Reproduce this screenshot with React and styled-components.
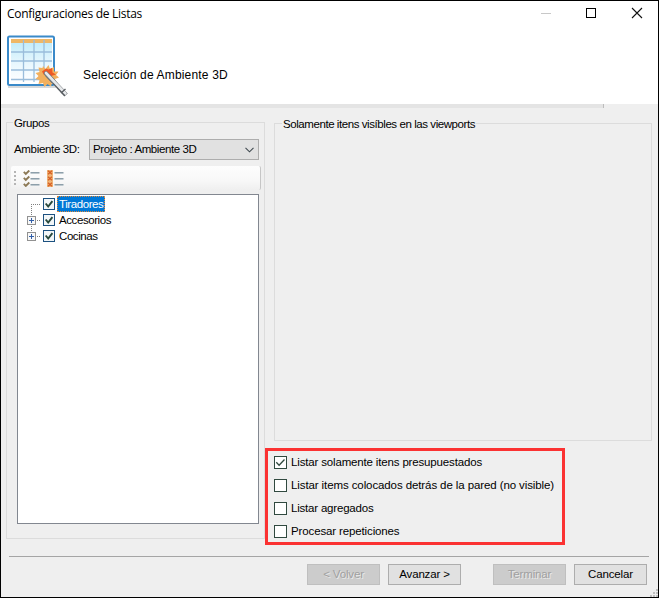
import React, { useState } from "react";
import styled, { createGlobalStyle } from "styled-components";

const options = [
	{ label: "Listar solamente itens presupuestados", checked: true, tracking: -0.16 },
	{ label: "Listar items colocados detrás de la pared (no visible)", checked: false, tracking: -0.1 },
	{ label: "Listar agregados", checked: false, tracking: -0.2 },
	{ label: "Procesar repeticiones", checked: false, tracking: -0.13 },
];

const groups = [
	{ name: "Tiradores", selected: true, expandable: false },
	{ name: "Accesorios", selected: false, expandable: true },
	{ name: "Cocinas", selected: false, expandable: true },
];

// sheet with the magic wand shown in the header
function WizardLogo() {
	return (
		<svg width="64" height="68" viewBox="0 0 64 68">
			<defs>
				<linearGradient id="sheet" x1="0" y1="0" x2="0" y2="1">
					<stop offset="0" stopColor="#bdeaf9" />
					<stop offset="0.6" stopColor="#eaf8fe" />
					<stop offset="1" stopColor="#ffffff" />
				</linearGradient>
			</defs>
			<path d="M2 56H50" stroke="#d6d9db" strokeWidth="2" />
			<rect x="2" y="5.5" width="46" height="48.5" rx="1.5" fill="#fff" stroke="#3a8ac9" strokeWidth="2" />
			<rect x="5" y="8" width="41" height="43" fill="url(#sheet)" />
			<rect x="5" y="8" width="41" height="4" fill="#efb766" />
			<path
				d="M5 21H46M5 30H46M5 39H46M5 48.5H46M17.5 9V51M28 9V51M38 9V51"
				stroke="#9abddb"
				strokeWidth="1.3"
				fill="none"
			/>
			<g transform="translate(0 -1)">
				<path
					d="M37 36l2.5 3 3-4 1.5 4 4-2 0 4.5 4.5 0-2.5 3.5 3 2.5-4 1.5 1 4-4-.5-1 4-3.5-2.5-3 3-1.500-4-4.5 1 1-4-4-1 3-3-3-3 4-1-1-4.5 4 .5z"
					fill="#f2b05e"
				/>
				<path d="M36 41.500l4-3 2.500 1 3.500-1.500.5 4.500 3.500 2-5 1.500-4-3-3 2z" fill="#ee5a27" />
				<path d="M41 44.500L60 65" stroke="#565b60" strokeWidth="4.5" />
				<path d="M40 43.500L47 51" stroke="#737b80" strokeWidth="4.5" strokeLinecap="round" />
				<path d="M40 43L59.5 63.5" stroke="#e7e9eb" strokeWidth="2.6" strokeLinecap="round" />
				<path d="M55 63l4.500-4" stroke="#565b60" strokeWidth="1.3" />
			</g>
		</svg>
	);
}

function ListIcon({ crossed }) {
	return (
		<svg width="17" height="17" viewBox="0 0 17 17">
			{crossed && <rect width="6" height="17" fill="#efb477" />}
			{[0, 6, 12].map((y) => (
				<g key={y} transform={`translate(0 ${y})`}>
					{crossed ? (
						<path d="M1 .7l4 3.5M5 .7l-4 3.5" stroke="#d65f24" strokeWidth="1.3" />
					) : (
						<path d="M.8 1.8l2 2.1L6.3.5" stroke="#8c7955" strokeWidth="1.9" fill="none" />
					)}
					<path d="M7.5 2.5h9" stroke="#8d9faa" />
					<path d="M7.5 3.5h9" stroke="#bdc8ce" />
				</g>
			))}
		</svg>
	);
}

function Expander({ expandable, last }) {
	return (
		<svg width="20" height="16" viewBox="0 0 20 16" shapeRendering="crispEdges">
			<path
				d={expandable ? (last ? "M8.5 0v8" : "M8.5 0v16") : "M8.5 8v8"}
				stroke="#808080"
				strokeDasharray="1 1"
			/>
			<path d="M8 8.5h9" stroke="#808080" strokeDasharray="1 1" />
			{expandable && (
				<>
					<rect x="4.5" y="4.5" width="8" height="8" fill="#f8f8f8" stroke="#919191" />
					<path d="M6 8.5h5M8.5 6v5" stroke="#315ea8" />
				</>
			)}
		</svg>
	);
}

function App() {
	const [checks, setChecks] = useState(options.map((o) => o.checked));

	const toggle = (index) => {
		setChecks(checks.map((c, i) => (i === index ? !c : c)));
	};

	return (
		<>
			<GlobalStyle />
			<Window>
				<Header>
					<TitleBar>
						<Title>Configuraciones de Listas</Title>
						<WindowControls width="112" height="24" viewBox="0 0 112 24">
							<path d="M0 12.5h10" stroke="#c8c8c8" />
							<rect x="45.5" y="7.5" width="9" height="9" fill="none" stroke="#000" />
							<path d="M91 7l10 10M101 7l-10 10" stroke="#111" strokeWidth="1.1" />
						</WindowControls>
					</TitleBar>
					<Banner>
						<WizardLogo />
						<Heading>Selección de Ambiente 3D</Heading>
					</Banner>
				</Header>
				<Strip />
				<Content>
					<GroupBox $width={259} $height={423}>
						<Legend $tracking={-0.4}>Grupos</Legend>
						<FieldRow>
							<FieldLabel>Ambiente 3D:</FieldLabel>
							<Combo>
								<Text $tracking={-0.4}>Projeto : Ambiente 3D</Text>
								<svg width="9" height="6" viewBox="0 0 9 6">
									<path d="M.5 .8l4 4 4-4" fill="none" stroke="#404a50" strokeWidth="1.1" />
								</svg>
							</Combo>
						</FieldRow>
						<Toolbar>
							<Grip />
							<ListIcon />
							<ListIcon crossed />
						</Toolbar>
						<Tree>
							{groups.map((group, i) => (
								<TreeRow key={group.name}>
									<Expander expandable={group.expandable} last={i === groups.length - 1} />
									<TreeCheck width="12" height="12" viewBox="0 0 12 12">
										<rect x=".5" y=".5" width="11" height="11" fill="#f2f6f8" stroke="#1c5180" />
										<path d="M2.7 5.5l2.5 3 4.2-5.3" fill="none" stroke="#27483c" strokeWidth="1.9" />
									</TreeCheck>
									<TreeLabel $selected={group.selected}>{group.name}</TreeLabel>
								</TreeRow>
							))}
						</Tree>
					</GroupBox>
					<RightColumn>
						<Preview>
							<GroupBox $width={378} $height={324}>
								<Legend $tracking={-0.43} $indent={7}>
									Solamente itens visíbles en las viewports
								</Legend>
							</GroupBox>
						</Preview>
						<OptionBox>
							{options.map((option, i) => (
								<Option key={option.label} onClick={() => toggle(i)}>
									<svg width="13" height="13" viewBox="0 0 13 13">
										<rect x=".5" y=".5" width="12" height="12" fill="#fff" stroke="#30493f" />
										{checks[i] && (
											<path d="M2.3 6.3l2.8 2.9 5.4-5.7" fill="none" stroke="#30493f" strokeWidth="1.3" />
										)}
									</svg>
									<Text $tracking={option.tracking}>{option.label}</Text>
								</Option>
							))}
						</OptionBox>
					</RightColumn>
				</Content>
				<Footer>
					<ButtonPair>
						<Button disabled>&lt; Volver</Button>
						<Button>Avanzar &gt;</Button>
					</ButtonPair>
					<ButtonPair>
						<Button disabled>Terminar</Button>
						<Button>Cancelar</Button>
					</ButtonPair>
				</Footer>
				<SizeGrip width="8" height="8" viewBox="0 0 8 8">
					<path d="M6 0h2v2h-2zM3 3h2v2h-2zM6 3h2v2h-2zM0 6h2v2h-2zM3 6h2v2h-2zM6 6h2v2h-2z" fill="#bfbfbf" />
				</SizeGrip>
			</Window>
		</>
	);
}

const GlobalStyle = createGlobalStyle`
	* {
		box-sizing: border-box;
	}
	body {
		margin: 0;
		overflow: hidden;
	}
	svg {
		display: block;
		flex: none;
	}
`;
const Window = styled.div`
	position: relative;
	display: flex;
	flex-direction: column;
	width: 659px;
	height: 598px;
	border: 1px solid #000;
	background: #efefef;
	color: #000;
	font: 11.5px/13px "Liberation Sans", Arial, sans-serif;
	white-space: nowrap;
`;
const Header = styled.header`
	height: 103px;
	background: #fff;
`;
const TitleBar = styled.div`
	display: flex;
	justify-content: space-between;
	height: 30px;
	padding: 1px 5px 0 6px;
`;
const Title = styled.span`
	font: 12px/24px "Open Sans", "Noto Sans", sans-serif;
	letter-spacing: -0.3px;
`;
const WindowControls = styled.svg`
	margin-top: -1px;
`;
const Banner = styled.div`
	display: flex;
	padding-left: 5px;
`;
const Heading = styled.h1`
	margin: 37px 0 0 13px;
	font-size: 12px;
	line-height: 15px;
	font-weight: 400;
	letter-spacing: 0.17px;
`;
const Strip = styled.div`
	width: 603px;
	height: 4px;
	background: #e4e4e4;
	border-right: 1px solid #bdbdbd;
`;
const Content = styled.main`
	display: flex;
	height: 448px;
	padding: 8px 0 0 5px;
`;
const GroupBox = styled.fieldset`
	width: ${(p) => p.$width}px;
	height: ${(p) => p.$height}px;
	min-width: 0;
	margin: 0;
	padding: 0;
	border: 1px solid #dcdcdc;
`;
const Legend = styled.legend`
	height: 13px;
	margin-left: ${(p) => p.$indent ?? 6}px;
	padding: 0 1px;
	line-height: 15px;
	letter-spacing: ${(p) => p.$tracking}px;
`;
const Text = styled.span`
	letter-spacing: ${(p) => p.$tracking}px;
`;
const FieldRow = styled.div`
	display: flex;
	justify-content: space-between;
	padding: 10px 5px 0 7px;
`;
const FieldLabel = styled.label`
	line-height: 21px;
	letter-spacing: -0.33px;
`;
const Combo = styled.div`
	display: flex;
	align-items: center;
	justify-content: space-between;
	width: 170px;
	height: 21px;
	padding: 0 4px 0 3px;
	border: 1px solid #adadad;
	background: #e1e1e1;
`;
const Toolbar = styled.div`
	display: flex;
	align-items: center;
	gap: 7px;
	width: 250px;
	height: 24px;
	margin: 6px 0 0 4px;
	padding-left: 3px;
	border-right: 1px solid #c6c6c6;
	border-radius: 2px;
	background: linear-gradient(#fdfdfd, #f8f8f8 60%, #efefef);
`;
const Grip = styled.div`
	width: 2px;
	height: 14px;
	background: repeating-linear-gradient(#b5b5b5 0 2px, transparent 2px 4px);
`;
const Tree = styled.div`
	width: 242px;
	height: 330px;
	margin: 4px 0 0 10px;
	padding: 1px 0 0 5px;
	border: 1px solid #828790;
	background: #fff;
`;
const TreeRow = styled.div`
	display: flex;
	height: 16px;
`;
const TreeCheck = styled.svg`
	margin: 2px 2px 0 0;
`;
const TreeLabel = styled.span`
	height: 16px;
	padding: 0 1px;
	line-height: 14px;
	letter-spacing: -0.42px;
	border: 1px ${(p) => (p.$selected ? "dotted #e08a3c" : "solid transparent")};
	background: ${(p) => (p.$selected ? "#0078d7" : "transparent")};
	color: ${(p) => (p.$selected ? "#fff" : "#000")};
`;
const RightColumn = styled.div`
	width: 387px;
`;
const Preview = styled.div`
	padding: 1px 0 0 9px;
`;
const OptionBox = styled.div`
	display: flex;
	flex-direction: column;
	gap: 10px;
	width: 300px;
	height: 97px;
	margin-top: 7px;
	padding: 5px 6px;
	border: 3px solid #fb3232;
`;
const Option = styled.label`
	display: flex;
	gap: 4px;
	height: 13px;
`;
const Footer = styled.footer`
	display: flex;
	justify-content: flex-end;
	gap: 32px;
	height: 30px;
	margin: 0 9px 0 8px;
	padding: 7px 2px 0 0;
	border-top: 1px solid #a5a5a5;
`;
const ButtonPair = styled.div`
	display: flex;
	gap: 8px;
`;
const Button = styled.button`
	width: 73px;
	height: 21px;
	padding: 0;
	border: 1px solid ${(p) => (p.disabled ? "#bfbfbf" : "#adadad")};
	background: ${(p) => (p.disabled ? "#cccccc" : "#e1e1e1")};
	color: ${(p) => (p.disabled ? "#a0a0a0" : "#000")};
	text-shadow: ${(p) => (p.disabled ? "1px 1px 0 #e9e9e9" : "none")};
	font: inherit;
	line-height: 19px;
	letter-spacing: -0.15px;
`;
const SizeGrip = styled.svg`
	position: absolute;
	right: 0;
	bottom: 0;
`;

export default App;
